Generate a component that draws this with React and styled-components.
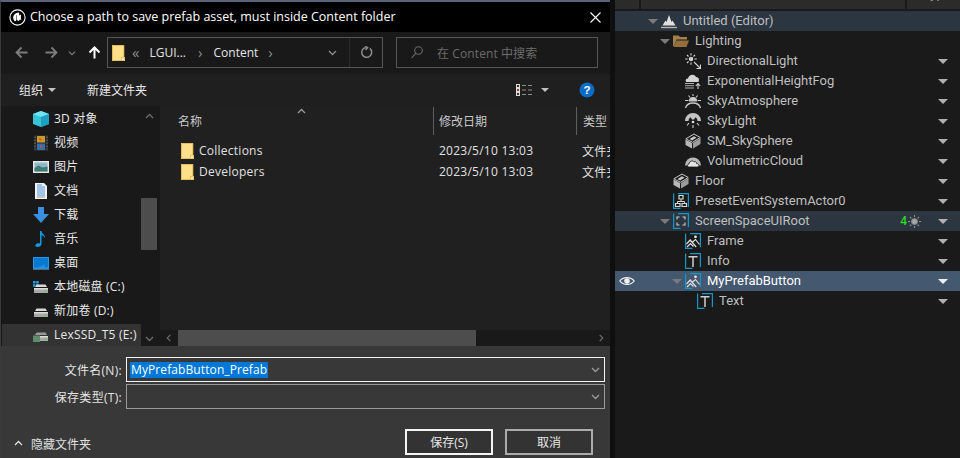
import styled, { createGlobalStyle } from 'styled-components'

const uiFont = `"Open Sans", "Noto Sans CJK SC", sans-serif`

const GlobalStyle = createGlobalStyle`
  html, body {
    margin: 0;
    height: 100%;
    background: #0f0f0f;
    overflow: hidden;
  }
  * {
    box-sizing: border-box;
  }
`

const Page = styled.div`
  display: flex;
  width: 960px;
  height: 458px;
  overflow: hidden;
`

const Dialog = styled.div`
  display: flex;
  flex-direction: column;
  width: 610px;
  height: 458px;
  flex-shrink: 0;
  border-top: 2px solid #5a6478;
  border-left: 1px solid #3a3a3a;
  font-family: ${uiFont};
  font-size: 12px;
  color: #e8e8e8;
`

const TitleBar = styled.div`
  display: flex;
  align-items: center;
  height: 30px;
  flex-shrink: 0;
  padding: 0 9px 0 8px;
  background: #000;
  color: #fff;
`

const Title = styled.span`
  flex: 1;
  margin: 0 0 2px 4px;
  font-size: 12.5px;
  white-space: nowrap;
`

const NavBar = styled.div`
  display: flex;
  align-items: center;
  height: 42px;
  flex-shrink: 0;
  padding: 0 12px 1px 13px;
  background: #191919;
`

const NavButton = styled.span`
  display: flex;
  justify-content: center;
  width: ${({ $w }) => $w}px;
  margin-right: ${({ $mr }) => $mr || 0}px;
  color: ${({ $active }) => ($active ? '#fff' : '#7d7d7d')};
`

const AddressBox = styled.div`
  display: flex;
  align-items: center;
  width: 276px;
  height: 31px;
  padding-left: 4px;
  border: 1px solid #555;
  margin-left: 6px;
`

const Crumb = styled.span`
  margin: 0 ${({ $mr }) => $mr}px 1px ${({ $ml }) => $ml}px;
  color: ${({ $dim }) => ($dim ? '#8a8a8a' : '#e4e4e4')};
  font-size: ${({ $dim }) => ($dim ? 15 : 12)}px;
  white-space: nowrap;
`

const AddressEnd = styled.div`
  display: flex;
  align-items: center;
  height: 100%;
  margin-left: auto;
  color: #8c8c8c;
`

const AddressCell = styled.span`
  display: flex;
  align-items: center;
  justify-content: center;
  width: ${({ $w }) => $w}px;
  height: 100%;
  border-left: ${({ $line }) => ($line ? '1px solid #2c2c2c' : 'none')};
`

const SearchBox = styled.div`
  display: flex;
  align-items: center;
  width: 202px;
  height: 31px;
  margin-left: 13px;
  padding-left: 14px;
  border: 1px solid #555;
  color: #6c6c6c;
`

const SearchText = styled.span`
  margin-left: 14px;
  letter-spacing: 0.1px;
  white-space: nowrap;
`

const ToolBar = styled.div`
  display: flex;
  align-items: center;
  height: 32px;
  flex-shrink: 0;
  padding: 0 15px 0 18px;
  background: #1f1f1f;
`

const ToolLabel = styled.span`
  white-space: nowrap;
`

const Caret = styled.span`
  width: 0;
  height: 0;
  border-left: ${({ $s }) => $s || 5}px solid transparent;
  border-right: ${({ $s }) => $s || 5}px solid transparent;
  border-top: ${({ $s }) => $s || 5}px solid ${({ $c }) => $c || '#c0c0c0'};
  margin-left: ${({ $ml }) => $ml || 0}px;
  margin-right: ${({ $mr }) => $mr || 0}px;
`

const ToolRight = styled.div`
  display: flex;
  align-items: center;
  margin-left: auto;
`

const Main = styled.div`
  display: flex;
  height: 240px;
  flex-shrink: 0;
`

const Sidebar = styled.div`
  display: flex;
  width: 159px;
  flex-shrink: 0;
  background: #191919;
  padding-right: 2px;
  overflow: hidden;
`

const SideList = styled.div`
  display: flex;
  flex-direction: column;
  gap: 2px;
  width: 140px;
  padding: 2px 0 0 1px;
`

const SideRow = styled.div`
  display: flex;
  align-items: center;
  height: 22px;
  padding-left: 31px;
  background: ${({ $on }) => ($on ? '#333' : 'transparent')};
  white-space: nowrap;
  overflow: hidden;
`

const SideIcon = styled.span`
  display: flex;
  width: 16px;
  height: 16px;
  margin-right: 5px;
  flex-shrink: 0;
`

const SideLabel = styled.span`
  margin-bottom: 2px;
  letter-spacing: 0.2px;
`

const VScroll = styled.div`
  display: flex;
  flex-direction: column;
  align-items: center;
  width: 16px;
  color: #6c6c6c;
  padding: 6px 0 3px;
`

const VThumb = styled.div`
  width: 100%;
  height: 52px;
  margin-top: 77px;
  background: #4d4d4d;
`

const VArrowDown = styled.span`
  display: flex;
  margin-top: auto;
`

const FilePane = styled.div`
  display: flex;
  flex-direction: column;
  flex: 1;
  min-width: 0;
  background: #202020;
`

const ColumnHeader = styled.div`
  position: relative;
  display: grid;
  grid-template-columns: 273px 143px 1fr;
  height: 28px;
  margin-top: 1px;
  flex-shrink: 0;
  color: #c8c8c8;
`

const SortMark = styled.span`
  position: absolute;
  left: 137px;
  top: 0;
  display: flex;
  color: #9a9a9a;
`

const ColumnCell = styled.div`
  display: flex;
  align-items: center;
  padding-left: ${({ $pl }) => $pl}px;
  border-left: ${({ $line }) => ($line ? '1px solid #5f5f5f' : 'none')};
  white-space: nowrap;
  overflow: hidden;
`

const FileList = styled.div`
  flex: 1;
  padding-top: 5px;
`

const FileRow = styled.div`
  display: grid;
  grid-template-columns: 273px 143px 1fr;
  align-items: center;
  height: 21px;
  color: #e0e0e0;
  letter-spacing: 0.25px;
`

const FileName = styled.div`
  display: flex;
  align-items: center;
  padding-left: 21px;
`

const FileCell = styled.div`
  padding-left: ${({ $pl }) => $pl || 6}px;
  white-space: nowrap;
  overflow: hidden;
`

const HScroll = styled.div`
  display: flex;
  align-items: center;
  height: 16px;
  flex-shrink: 0;
  background: #191919;
  color: #6c6c6c;
`

const HArrow = styled.span`
  display: flex;
  justify-content: center;
  width: ${({ $w }) => $w}px;
  margin-left: ${({ $auto }) => ($auto ? 'auto' : 0)};
`

const HThumb = styled.div`
  width: 298px;
  height: 100%;
  background: #4d4d4d;
`

const Footer = styled.div`
  flex: 1;
  display: flex;
  flex-direction: column;
  padding: 11px 5px 0 0;
  background: #383838;
`

const Field = styled.div`
  display: grid;
  grid-template-columns: 125px 1fr;
  align-items: center;
  height: 25px;
  margin-bottom: 2px;
`

const FieldLabel = styled.label`
  padding-right: 4px;
  text-align: right;
  color: #e4e4e4;
  letter-spacing: 0.3px;
`

const FieldBox = styled.div`
  display: flex;
  align-items: center;
  height: 25px;
  padding: 0 4px 0 3px;
  border: 1px solid ${({ $on }) => ($on ? '#f4f4f4' : '#9a9a9a')};
  color: #9a9a9a;
`

const Selected = styled.span`
  padding: 0 1px;
  line-height: 16px;
  background: #0078d7;
  color: #fff;
  letter-spacing: 0.1px;
`

const BoxArrow = styled.span`
  display: flex;
  margin-left: auto;
`

const FooterRow = styled.div`
  display: flex;
  align-items: center;
  margin-top: 18px;
  padding-left: 13px;
  padding-right: 12px;
`

const HideFolders = styled.span`
  display: flex;
  align-items: center;
  margin-top: 3px;
  color: #e0e0e0;
`

const HideText = styled.span`
  margin-left: 8px;
`

const ButtonRow = styled.div`
  display: flex;
  gap: 12px;
  margin-left: auto;
`

const DlgButton = styled.button`
  width: 88px;
  height: 26px;
  padding: 0;
  background: #333;
  border: 2px solid ${({ $primary }) => ($primary ? '#f4f4f4' : '#ababab')};
  color: #e8e8e8;
  font-family: ${uiFont};
  font-size: 12px;
`

const Outliner = styled.div`
  flex: 1;
  margin-left: 5px;
  background: #1a1a1a;
  font-family: Roboto, sans-serif;
  font-size: 13px;
  color: #bfbfbf;
`

const OutlinerHead = styled.div`
  display: grid;
  grid-template-columns: 24px 264px 1fr;
  gap: 2px;
  height: 9px;
  margin-bottom: 2px;
  overflow: hidden;
`

const HeadCell = styled.div`
  height: 9px;
  padding-left: ${({ $pl }) => $pl || 0}px;
  background: #2b2b2b;
  overflow: hidden;
  white-space: nowrap;
`

const HeadText = styled.span`
  display: block;
  margin-top: -14px;
  line-height: 16px;
  color: #a0a0a0;
`

const Row = styled.div`
  display: flex;
  align-items: center;
  height: 20px;
  padding-right: 12px;
  background: ${({ $tone }) => ({ soft: '#2b3641', selected: '#44586f' })[$tone] || 'transparent'};
  color: ${({ $tone }) => ($tone === 'selected' ? '#fff' : '#bfbfbf')};
`

const EyeSlot = styled.span`
  display: flex;
  width: 32px;
  padding-left: 4px;
  flex-shrink: 0;
`

const Indent = styled.span`
  flex-shrink: 0;
  width: ${({ $level }) => $level * 12}px;
`

const ArrowSlot = styled.span`
  display: flex;
  justify-content: center;
  width: 12px;
  padding-right: 1px;
  flex-shrink: 0;
`

const RowIcon = styled.span`
  display: flex;
  width: 16px;
  height: 16px;
  margin: 0 6px 0 2px;
  flex-shrink: 0;
`

const RowLabel = styled.span`
  flex: 1;
  margin-bottom: 2px;
  white-space: nowrap;
`

const Count = styled.span`
  display: flex;
  align-items: center;
  margin-right: 17px;
  color: #22dd22;
  font-size: 12px;
  font-weight: 500;
`

const cyan = '#0f98cc'

const UeLogo = () => (
  <svg width="17" height="17" viewBox="0 0 17 17" fill="none">
    <circle cx="8.5" cy="8.5" r="7.6" stroke="#fff" strokeWidth="1.1" />
    <path d="M9.5 3.6c-2.700.3-5 2-5.300 4.500-.2 1.500.4 3 1.700 4.300l1.300-1V6.800c0-.5.3-.8.7-.9-.3.400-.2.800-.2 1.200v3.600l1.700 1.400 1.900-1.500c.3.400.9.600 1.600.3-.6 0-1-.6-1-1.100V5.400c-.6.200-1.200.600-1.700 1.200V4.300c-.2-.3-.4-.5-.7-.7z" fill="#fff" />
  </svg>
)

const CloseIcon = () => (
  <svg width="11" height="11" viewBox="0 0 11 11" stroke="#fff" strokeWidth="1.1">
    <path d="M.5.5l10 10M10.500.500l-10 10" />
  </svg>
)

const NavArrow = ({ flip, up }) => (
  <svg width="13" height="13" viewBox="0 0 13 13" fill="none" stroke="currentColor" strokeWidth={up ? 2 : 1.8}
    style={{ transform: up ? 'rotate(90deg)' : flip ? 'rotate(180deg)' : 'none' }}>
    <path d="M12.500 6.500H1.500M6.500 1.500l-5 5 5 5" />
  </svg>
)

const Chevron = ({ dir = 'down', size = 9 }) => (
  <svg width={size} height={size} viewBox="0 0 9 9" fill="none" stroke="currentColor" strokeWidth="1.3"
    style={{ transform: { down: 'none', up: 'rotate(180deg)', left: 'rotate(90deg)', right: 'rotate(-90deg)' }[dir] }}>
    <path d="M1 3l3.500 3.500L8 3" />
  </svg>
)

const FolderIcon = ({ w = 13, h = 16 }) => (
  <svg width={w} height={h} viewBox="0 0 13 16">
    <path d="M0 0h12v11.500L9.500 16H0z" fill="#ffe08a" />
    <path d="M.5.500h11.300v15H.5z" fill="none" stroke="#e8bd57" />
    <path d="M9 12h4v4H9z" fill="#ecc25e" />
    <path d="M10 13h2v2h-2z" fill="#fff1bf" />
  </svg>
)

const SearchIcon = () => (
  <svg width="12" height="13" viewBox="0 0 12 13" fill="none" stroke="#6c6c6c" strokeWidth="1.1">
    <circle cx="7.500" cy="4.500" r="3.800" />
    <path d="M4.800 7.300L.5 12" />
  </svg>
)

const RefreshIcon = () => (
  <svg width="13" height="13" viewBox="0 0 13 13" fill="none" stroke="currentColor" strokeWidth="1.5">
    <path d="M9.800 2.400a5 5 0 1 1-4-1" />
    <path d="M5 .3l2.600 1.300L5.600 4" />
  </svg>
)

const ViewIcon = () => (
  <svg width="16" height="12" viewBox="0 0 16 12">
    <path d="M0 0h4v12H0z" fill="#ddd" />
    <path d="M1 1h2v2H1zM1 9h2v2H1z" fill="#333" />
    <path d="M1 5h2v2H1z" fill="#a33" />
    <path d="M6 1.500h4M12 1.500h4M6 6h4M12 6h4M6 10.500h4M12 10.500h4" stroke="#8d8d8d" />
  </svg>
)

const HelpIcon = () => (
  <svg width="16" height="16" viewBox="0 0 16 16">
    <circle cx="8" cy="8" r="7.500" fill="#0a6cc4" />
    <text x="8" y="12.200" textAnchor="middle" fontFamily="Liberation Sans" fontSize="11.5" fontWeight="700" fill="#fff">?</text>
  </svg>
)

const CubeIcon = () => (
  <svg viewBox="0 0 16 16">
    <path d="M8 0l8 3v10l-8 3-8-3V3z" fill="#37c3d8" />
    <path d="M0 3l8 3 8-3-8-3z" fill="#6fe3ef" />
    <path d="M8 6v10l8-3V3z" fill="#1d9fc0" />
  </svg>
)

const FilmIcon = () => (
  <svg viewBox="0 0 16 16">
    <path d="M1 0h14v16H1z" fill="#2a2a2a" />
    <path d="M4 1h8v6.500H4z" fill="#c79b2c" />
    <path d="M4 8.500h8V15H4z" fill="#2f6fb2" />
    <path d="M6 3l3 1-2 2zM7 10l3 1-3 2z" fill="#e24b34" />
    <path d="M2 1.500v13M14 1.500v13" stroke="#777" strokeDasharray="1.5 1.5" />
  </svg>
)

const PictureIcon = () => (
  <svg viewBox="0 0 16 16">
    <path d="M0 2h16v12H0z" fill="#e8e8e8" />
    <path d="M1.500 3.500h13v9h-13z" fill="#8fb9c8" />
    <path d="M1.500 9l4-2.500 4 2 5-1v5h-13z" fill="#3f7a76" />
  </svg>
)

const DocIcon = () => (
  <svg viewBox="0 0 16 16">
    <path d="M2 0h9l3 3v13H2z" fill="#f2f2f2" />
    <path d="M4 2h5M4 4h8M4 6h8M4 8h8M4 10h8M4 12h8" stroke="#3c8fd6" strokeWidth=".9" />
    <path d="M4 14h8" stroke="#999" />
  </svg>
)

const DownloadIcon = () => (
  <svg viewBox="0 0 16 16">
    <path d="M5 0h6v7h5l-8 9-8-9h5z" fill="#3a8fe0" />
  </svg>
)

const MusicIcon = () => (
  <svg viewBox="0 0 16 16">
    <path d="M7 0h1.500c.3 3 4 3.500 3.500 7.500-.5-2-2-3-3.500-3.300V13c0 2-2 3-4 3-1.500 0-2.500-.8-2-2 .5-1.500 3-2.200 4.500-1.500z" fill="#1298e6" />
  </svg>
)

const DesktopIcon = () => (
  <svg viewBox="0 0 16 16">
    <path d="M0 2h16v11.500H0z" fill="#1c9cf0" />
    <path d="M1 3h14v9.500H1z" fill="#0a78d0" />
    <path d="M4 13l8-4v3.500z" fill="#2ba5f2" opacity=".5" />
    <path d="M0 13.500h16v1H0z" fill="#66c2f7" />
  </svg>
)

const DriveIcon = ({ win, usb }) => (
  <svg viewBox="0 0 16 16">
    {win && <path d="M0 2h2.500v2.500H0zM3.200 2h2.500v2.500H3.200zM0 5.200h2.500v2.500H0zM3.200 5.200h2.500v2.500H3.200z" fill="#19a3f5" />}
    <path d="M2 8l1.500-2.500h9L14 8z" fill={win || !usb ? '#d8d8d8' : '#999'} />
    <path d="M1 9h14v5H1z" fill="#a8a8a8" />
    <path d="M1 9h14v1.500H1z" fill="#dcdcdc" />
    <path d="M11.500 11h2v1.500h-2z" fill="#52d04a" />
    {usb && <path d="M0 8.500h7V15H0z" fill="#5f8c6a" />}
  </svg>
)

const DownCaret = ({ c = '#9c9c9c' }) => <Caret $s={5} $c={c} />

const Brackets = () => (
  <path d="M.6 .6V15.400H7.500M5 .6H15.400V14" fill="none" stroke={cyan} strokeWidth="1.2" />
)

const LevelIcon = () => (
  <svg viewBox="0 0 16 16">
    <path d="M1.500 12.500l3-5 1 1.500L8 2l2.500 7 1-1.500 3 5z" fill="#e0e0e0" />
    <path d="M0 13.800h16v1.400H0z" fill="#b4b4b4" />
  </svg>
)

const OpenFolderIcon = () => (
  <svg viewBox="0 0 16 16">
    <path d="M0 2.500h5.500L7 4h7v2.500H3.500L1 13H0z" fill="#a4804d" />
    <path d="M3.500 7.500H16L13.500 14H.5z" fill="#936f3d" />
  </svg>
)

const SunArrowIcon = () => (
  <svg viewBox="0 0 16 16" fill="none" stroke="#d4d4d4" strokeWidth="1.1">
    <circle cx="6" cy="6" r="1.700" fill="#d4d4d4" />
    <path d="M6 .2v2.400M6 9.400v2.400M.2 6h2.400M9.400 6h2.400M2 2l1.500 1.500M8.500 3.500L10 2M2 10l1.500-1.500" />
    <path d="M9 9l6 6M15.500 11.500v4h-4" />
  </svg>
)

const FogIcon = () => (
  <svg viewBox="0 0 16 16">
    <path d="M1 9c-1-2 0-3.500 2-3.500C3.500 2 9 0 11 4c3 0 3.500 3 2.500 5z" fill="#d4d4d4" />
    <path d="M0 10.500h9M0 12.700h9M0 15h9" stroke="#b0b0b0" strokeWidth="1" />
    <path d="M13 16v-5M10.800 13l2.200-2.500 2.200 2.500" stroke="#d4d4d4" fill="none" strokeWidth="1.1" />
  </svg>
)

const AtmosphereIcon = () => (
  <svg viewBox="0 0 16 16" fill="none" stroke="#c8c8c8" strokeWidth="1.1">
    <path d="M4.500 8a3.500 3.500 0 0 1 7 0z" fill="#c8c8c8" />
    <path d="M8 1v2M3.500 2.500l1.500 2M12.500 2.500l-1.500 2M0 7.500h3.500M12.500 7.500H16" />
    <path d="M.5 15c1-3.500 4-5 7.500-5s6.500 1.500 7.500 5" strokeWidth="1.3" />
  </svg>
)

const SkyLightIcon = () => (
  <svg viewBox="0 0 16 16">
    <path d="M0 8a8 8 0 0 1 16 0h-3.500a4.500 4.500 0 0 0-9 0z" fill="#c4c4c4" />
    <path d="M5 3.500a5 5 0 0 1 6 0L9 6.500H7z" fill="#c4c4c4" />
    <circle cx="8" cy="9" r="1.300" fill="#e0e0e0" />
    <path d="M8 12v3M4 10l-2 2.500M12 10l2 2.500" stroke="#d0d0d0" strokeWidth="1.1" />
  </svg>
)

const MeshIcon = () => (
  <svg viewBox="0 0 16 16">
    <path d="M.5 6.500L7 10v5.500L.5 12z" fill="#b8b8b8" />
    <path d="M8 10l7.500-5v6L8 15.500z" fill="#9c9c9c" />
    <path d="M.8 5.800L9 1l6.200 3.500L7.500 9.300z" fill="#1a1a1a" stroke="#c8c8c8" />
    <path d="M4.500 6L9 3.200l2.500 1.500L7 7.500z" fill="#c8c8c8" />
  </svg>
)

const CloudDomeIcon = () => (
  <svg viewBox="0 0 16 16">
    <path d="M0 12.500a8 8 0 0 1 16 0z" fill="#b8b8b8" />
    <path d="M4 14c-2 0-2-3 0-3 .3-3 3.500-4 5-2 1-1 3 0 2.500 1.500 2 0 3 1.500 2 3.500z" fill="#e4e4e4" stroke="#1a1a1a" strokeWidth=".8" />
  </svg>
)

const EventIcon = () => (
  <svg viewBox="0 0 16 16" fill="none">
    <Brackets />
    <path d="M6 2.500h4v3.500H6zM2.500 10.500h4.500v3H2.500zM9 10.500h4.500v3H9z" stroke="#d8d8d8" strokeWidth="1.2" />
    <path d="M8 6v2.500M4.500 10.500v-2h7v2" stroke="#d8d8d8" />
  </svg>
)

const ScreenIcon = () => (
  <svg viewBox="0 0 16 16" fill="none">
    <Brackets />
    <path d="M4 6.500V4h2.500M9.500 4H12v2.500M12 9.500V12H9.500M6.500 12H4V9.500" stroke="#d0d0d0" strokeWidth="1.1" />
  </svg>
)

const ImageIcon = () => (
  <svg viewBox="0 0 16 16" fill="none">
    <Brackets />
    <circle cx="10.500" cy="3.800" r="1.400" fill="#e8e8e8" />
    <path d="M1.500 11l3.700-4 6 7M7.500 9l3-2.500 4 5M2 14l3.500-3.500 3 3" stroke="#e0e0e0" strokeWidth="1.2" />
  </svg>
)

const TextIcon = () => (
  <svg viewBox="0 0 16 16" fill="none">
    <Brackets />
    <path d="M3.500 3.700h9M8 3.700V14" stroke="#cfcfcf" strokeWidth="1.5" />
  </svg>
)

const EyeIcon = () => (
  <svg width="16" height="12" viewBox="0 0 16 12" fill="none" stroke="#f0f0f0" strokeWidth="1.2">
    <path d="M.8 6C4 1.500 12 1.500 15.200 6 12 10.500 4 10.500.8 6z" />
    <circle cx="8" cy="6" r="2.200" fill="#f0f0f0" />
  </svg>
)

const SunIcon = () => (
  <svg width="13" height="13" viewBox="0 0 13 13" fill="none" stroke="#8d8d8d" strokeWidth="1.1" style={{ marginLeft: 1 }}>
    <circle cx="6.500" cy="6.500" r="2.800" fill="#a8a8a8" />
    <path d="M6.500 0v2M6.500 11v2M0 6.500h2M11 6.500h2M2 2l1.300 1.300M9.700 9.700L11 11M2 11l1.300-1.300M9.700 3.300L11 2" />
  </svg>
)

const sideItems = [
  { label: '3D 对象', icon: <CubeIcon /> },
  { label: '视频', icon: <FilmIcon /> },
  { label: '图片', icon: <PictureIcon /> },
  { label: '文档', icon: <DocIcon /> },
  { label: '下载', icon: <DownloadIcon /> },
  { label: '音乐', icon: <MusicIcon /> },
  { label: '桌面', icon: <DesktopIcon /> },
  { label: '本地磁盘 (C:)', icon: <DriveIcon win /> },
  { label: '新加卷 (D:)', icon: <DriveIcon /> },
  { label: 'LexSSD_T5 (E:)', icon: <DriveIcon usb />, on: true },
]

const files = ['Collections', 'Developers']

const tree = [
  { label: 'Untitled (Editor)', level: 0, open: true, icon: <LevelIcon />, tone: 'soft', noMenu: true },
  { label: 'Lighting', level: 1, open: true, icon: <OpenFolderIcon />, noMenu: true },
  { label: 'DirectionalLight', level: 2, icon: <SunArrowIcon /> },
  { label: 'ExponentialHeightFog', level: 2, icon: <FogIcon /> },
  { label: 'SkyAtmosphere', level: 2, icon: <AtmosphereIcon /> },
  { label: 'SkyLight', level: 2, icon: <SkyLightIcon /> },
  { label: 'SM_SkySphere', level: 2, icon: <MeshIcon /> },
  { label: 'VolumetricCloud', level: 2, icon: <CloudDomeIcon /> },
  { label: 'Floor', level: 1, icon: <MeshIcon /> },
  { label: 'PresetEventSystemActor0', level: 1, icon: <EventIcon /> },
  { label: 'ScreenSpaceUIRoot', level: 1, open: true, icon: <ScreenIcon />, tone: 'soft', count: 4 },
  { label: 'Frame', level: 2, icon: <ImageIcon /> },
  { label: 'Info', level: 2, icon: <TextIcon /> },
  { label: 'MyPrefabButton', level: 2, open: true, icon: <ImageIcon />, tone: 'selected', eye: true },
  { label: 'Text', level: 3, icon: <TextIcon /> },
]

const TreeRow = ({ item }) => (
  <Row $tone={item.tone}>
    <EyeSlot>{item.eye && <EyeIcon />}</EyeSlot>
    <Indent $level={item.level} />
    <ArrowSlot>{item.open && <DownCaret c="#7a7a7a" />}</ArrowSlot>
    <RowIcon>{item.icon}</RowIcon>
    <RowLabel>{item.label}</RowLabel>
    {item.count && (
      <Count>
        {item.count}
        <SunIcon />
      </Count>
    )}
    {!item.noMenu && <DownCaret c={item.tone === 'selected' ? '#f0f0f0' : '#b0b0b0'} />}
  </Row>
)

export default function App() {
  return (
    <>
      <GlobalStyle />
      <Page>
        <Dialog>
          <TitleBar>
            <UeLogo />
            <Title>Choose a path to save prefab asset, must inside Content folder</Title>
            <CloseIcon />
          </TitleBar>
          <NavBar>
            <NavButton $w={14} $mr={16}><NavArrow /></NavButton>
            <NavButton $w={14} $mr={9}><NavArrow flip /></NavButton>
            <NavButton $w={10} $mr={10}><Chevron size={8} /></NavButton>
            <NavButton $w={14} $active><NavArrow up /></NavButton>
            <AddressBox>
              <FolderIcon />
              <Crumb $ml={7} $mr={10} $dim>«</Crumb>
              <Crumb $ml={0} $mr={12}>LGUI...</Crumb>
              <Crumb $ml={0} $mr={11} $dim>›</Crumb>
              <Crumb $ml={0} $mr={10}>Content</Crumb>
              <Crumb $ml={0} $mr={0} $dim>›</Crumb>
              <AddressEnd>
                <AddressCell $w={33}><Chevron /></AddressCell>
                <AddressCell $w={33} $line><RefreshIcon /></AddressCell>
              </AddressEnd>
            </AddressBox>
            <SearchBox>
              <SearchIcon />
              <SearchText>在 Content 中搜索</SearchText>
            </SearchBox>
          </NavBar>
          <ToolBar>
            <ToolLabel>组织</ToolLabel>
            <Caret $s={4.5} $ml={5} $mr={31} />
            <ToolLabel>新建文件夹</ToolLabel>
            <ToolRight>
              <ViewIcon />
              <Caret $s={4.5} $ml={9} $mr={30} />
              <HelpIcon />
            </ToolRight>
          </ToolBar>
          <Main>
            <Sidebar>
              <SideList>
                {sideItems.map((item) => (
                  <SideRow key={item.label} $on={item.on}>
                    <SideIcon>{item.icon}</SideIcon>
                    <SideLabel>{item.label}</SideLabel>
                  </SideRow>
                ))}
              </SideList>
              <VScroll>
                <Chevron dir="up" />
                <VThumb />
                <VArrowDown><Chevron /></VArrowDown>
              </VScroll>
            </Sidebar>
            <FilePane>
              <ColumnHeader>
                <SortMark><Chevron dir="up" /></SortMark>
                <ColumnCell $pl={18}>名称</ColumnCell>
                <ColumnCell $pl={5} $line>修改日期</ColumnCell>
                <ColumnCell $pl={6} $line>类型</ColumnCell>
              </ColumnHeader>
              <FileList>
                {files.map((name) => (
                  <FileRow key={name}>
                    <FileName>
                      <FolderIcon />
                      <FileCell $pl={5}>{name}</FileCell>
                    </FileName>
                    <FileCell>2023/5/10 13:03</FileCell>
                    <FileCell>文件夹</FileCell>
                  </FileRow>
                ))}
              </FileList>
              <HScroll>
                <HArrow $w={18}><Chevron dir="left" size={8} /></HArrow>
                <HThumb />
                <HArrow $w={18} $auto><Chevron dir="right" size={8} /></HArrow>
              </HScroll>
            </FilePane>
          </Main>
          <Footer>
            <Field>
              <FieldLabel>文件名(N):</FieldLabel>
              <FieldBox $on>
                <Selected>MyPrefabButton_Prefab</Selected>
                <BoxArrow><Chevron /></BoxArrow>
              </FieldBox>
            </Field>
            <Field>
              <FieldLabel>保存类型(T):</FieldLabel>
              <FieldBox>
                <BoxArrow><Chevron /></BoxArrow>
              </FieldBox>
            </Field>
            <FooterRow>
              <HideFolders>
                <Chevron dir="up" />
                <HideText>隐藏文件夹</HideText>
              </HideFolders>
              <ButtonRow>
                <DlgButton $primary>保存(S)</DlgButton>
                <DlgButton>取消</DlgButton>
              </ButtonRow>
            </FooterRow>
          </Footer>
        </Dialog>
        <Outliner>
          <OutlinerHead>
            <HeadCell />
            <HeadCell $pl={5}><HeadText>Item Label</HeadText></HeadCell>
            <HeadCell $pl={16}><HeadText>Type</HeadText></HeadCell>
          </OutlinerHead>
          {tree.map((item) => (
            <TreeRow key={item.label} item={item} />
          ))}
        </Outliner>
      </Page>
    </>
  )
}
